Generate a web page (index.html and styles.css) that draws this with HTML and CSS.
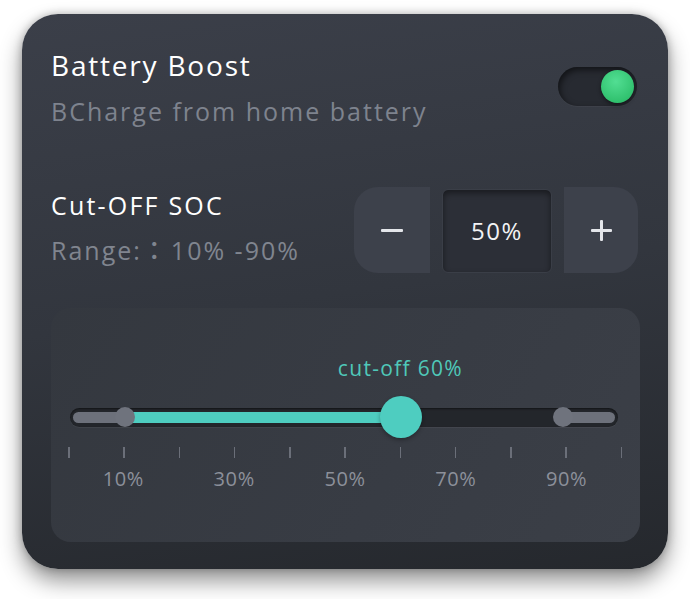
FILE: index.html
```html
<!DOCTYPE html>
<html lang="en">
<head>
<meta charset="utf-8">
<title>Battery Boost</title>
<link rel="stylesheet" href="styles.css">
</head>
<body>
<div class="card">
  <div class="header">
    <div class="header-text">
      <div class="title">Battery Boost</div>
      <div class="subtitle">BCharge from home battery</div>
    </div>
    <div class="toggle"><div class="toggle-knob"></div></div>
  </div>

  <div class="soc-row">
    <div class="soc-text">
      <div class="soc-title">Cut-OFF SOC</div>
      <div class="soc-range">Range:<span class="fw">：</span>10% -90%</div>
    </div>
    <div class="stepper">
      <div class="step-btn step-minus"><span class="minus-bar"></span></div>
      <div class="step-value">50%</div>
      <div class="step-btn step-plus"><span class="plus-h"></span><span class="plus-v"></span></div>
    </div>
  </div>

  <div class="panel">
    <div class="cut-row">
      <div class="cut-label" style="left:60%">cut-off 60%</div>
    </div>
    <div class="slider">
      <div class="groove">
        <div class="fill fill-gray" style="left:0; width:10%"></div>
        <div class="fill fill-teal" style="left:10%; width:50%"></div>
        <div class="fill fill-gray" style="left:89.3%; right:0"></div>
      </div>
      <div class="handle handle-small" style="left:10.3%"></div>
      <div class="handle handle-small" style="left:89.3%"></div>
      <div class="handle handle-main" style="left:60.1%"></div>
    </div>
    <div class="ticks">
      <span></span><span></span><span></span><span></span><span></span><span></span><span></span><span></span><span></span><span></span><span></span>
    </div>
    <div class="tick-labels">
      <span>10%</span><span>30%</span><span>50%</span><span>70%</span><span>90%</span>
    </div>
  </div>
</div>
</body>
</html>
```
FILE: styles.css
```css
html, body {
  margin: 0;
  background: #ffffff;
}
body {
  padding: 14px 0 30px 22px;
  font-family: "Open Sans", "Liberation Sans", "Noto Sans CJK TC", sans-serif;
}
.card {
  box-sizing: border-box;
  width: 646px;
  height: 555px;
  padding: 35px 28px 27px 29px;
  border-radius: 36px;
  background: linear-gradient(172deg, #3b3f49 0%, #32363e 50%, #25282d 100%);
  box-shadow: 0 12px 22px rgba(0,0,0,0.42), 0 0 8px rgba(0,0,0,0.25);
  display: flex;
  flex-direction: column;
}
.header {
  display: flex;
  justify-content: space-between;
  align-items: flex-start;
}
.title {
  font-size: 28px;
  line-height: 32px;
  font-weight: 500;
  color: #ffffff;
  letter-spacing: 1.8px;
}
.subtitle {
  margin-top: 15px;
  font-size: 25px;
  line-height: 30px;
  color: #7e838e;
  letter-spacing: 2px;
}
.toggle {
  margin-top: 18px;
  margin-right: 3px;
  width: 79px;
  height: 39px;
  border-radius: 20px;
  background: #272a31;
  box-shadow: inset 2px 3px 6px rgba(0,0,0,0.55), 0 1px 1px rgba(255,255,255,0.04);
  display: flex;
  align-items: center;
  justify-content: flex-end;
  padding-right: 3px;
  box-sizing: border-box;
}
.toggle-knob {
  width: 33px;
  height: 33px;
  border-radius: 50%;
  background: radial-gradient(circle at 45% 35%, #52de93 0%, #31c26f 70%, #28ab5f 100%);
  box-shadow: 0 2px 4px rgba(0,0,0,0.45);
}
.soc-row {
  margin-top: 61px;
  display: flex;
  justify-content: space-between;
  align-items: flex-start;
}
.soc-text {
  padding-top: 3px;
}
.soc-title {
  font-size: 25px;
  line-height: 30px;
  font-weight: 500;
  color: #ffffff;
  letter-spacing: 2.2px;
}
.soc-range {
  margin-top: 14px;
  font-size: 25px;
  line-height: 30px;
  color: #80858f;
  letter-spacing: 2px;
  white-space: nowrap;
}
.fw {
  font-family: "Noto Sans CJK TC", "Noto Sans CJK JP", sans-serif;
  font-weight: 500;
  letter-spacing: 4px;
}
.stepper {
  display: flex;
  gap: 12px;
  height: 86px;
  margin-right: 2px;
}
.step-btn {
  position: relative;
  background: #3d414b;
  display: flex;
  align-items: center;
  justify-content: center;
}
.step-minus {
  width: 76px;
  border-radius: 24px 0 0 24px;
}
.step-plus {
  width: 74px;
  border-radius: 0 24px 24px 0;
}
.minus-bar {
  display: block;
  width: 22px;
  height: 3px;
  background: #e4e6ea;
  border-radius: 1px;
}
.plus-h, .plus-v {
  position: absolute;
  background: #e4e6ea;
  border-radius: 1px;
}
.plus-h {
  width: 21px;
  height: 3px;
  left: 27px;
  top: 42px;
}
.plus-v {
  width: 3px;
  height: 21px;
  left: 36px;
  top: 33px;
}
.step-value {
  box-sizing: border-box;
  width: 110px;
  margin-top: 2px;
  border-radius: 6px;
  background: #2c2f37;
  border: 1px solid #3a3e47;
  box-shadow: inset 0 3px 6px rgba(0,0,0,0.45);
  display: flex;
  align-items: center;
  justify-content: center;
  font-size: 24px;
  color: #f2f3f5;
  letter-spacing: 1.5px;
  padding-bottom: 2px;
}
.panel {
  box-sizing: border-box;
  margin-top: 35px;
  flex: 1;
  border-radius: 20px;
  background: linear-gradient(120deg, #34383f 0%, #383c44 60%, #3b3f47 100%);
  padding: 47px 18px 0 17px;
}
.cut-row {
  position: relative;
  height: 26px;
}
.cut-label {
  position: absolute;
  top: 0;
  transform: translateX(-50%);
  white-space: nowrap;
  font-size: 21px;
  line-height: 26px;
  color: #4fc8b9;
  letter-spacing: 1.3px;
}
.slider {
  position: relative;
  margin-top: 15px;
  height: 42px;
  display: flex;
  align-items: center;
}
.groove {
  position: relative;
  box-sizing: border-box;
  margin: 0 4px 0 2px;
  flex: 1;
  height: 19px;
  border-radius: 10px;
  background: #23262b;
  box-shadow: inset 0 1px 2px rgba(0,0,0,0.5), 0 1px 0 rgba(255,255,255,0.05);
}
.fill {
  position: absolute;
  top: 4px;
  height: 11px;
  border-radius: 6px;
}
.fill-gray {
  background: #6d717b;
  margin-left: 3px;
  margin-right: 3px;
}
.fill-teal {
  background: #4ecdc0;
  border-radius: 0;
}
.handle {
  position: absolute;
  top: 50%;
  border-radius: 50%;
  transform: translate(-50%, -50%);
}
.handle-small {
  width: 20px;
  height: 20px;
  background: #6f737d;
}
.handle-main {
  width: 42px;
  height: 42px;
  background: #4ecdc0;
  box-shadow: 0 2px 4px rgba(0,0,0,0.3);
}
.ticks {
  margin-top: 9px;
  height: 11px;
  display: flex;
  justify-content: space-between;
}
.ticks span {
  width: 1.5px;
  height: 11px;
  background: #6b6f79;
}
.tick-labels {
  margin-top: 8px;
  display: grid;
  grid-template-columns: repeat(5, 1fr);
  font-size: 20px;
  line-height: 26px;
  color: #8c909a;
  text-align: center;
  letter-spacing: 0.6px;
}
```
